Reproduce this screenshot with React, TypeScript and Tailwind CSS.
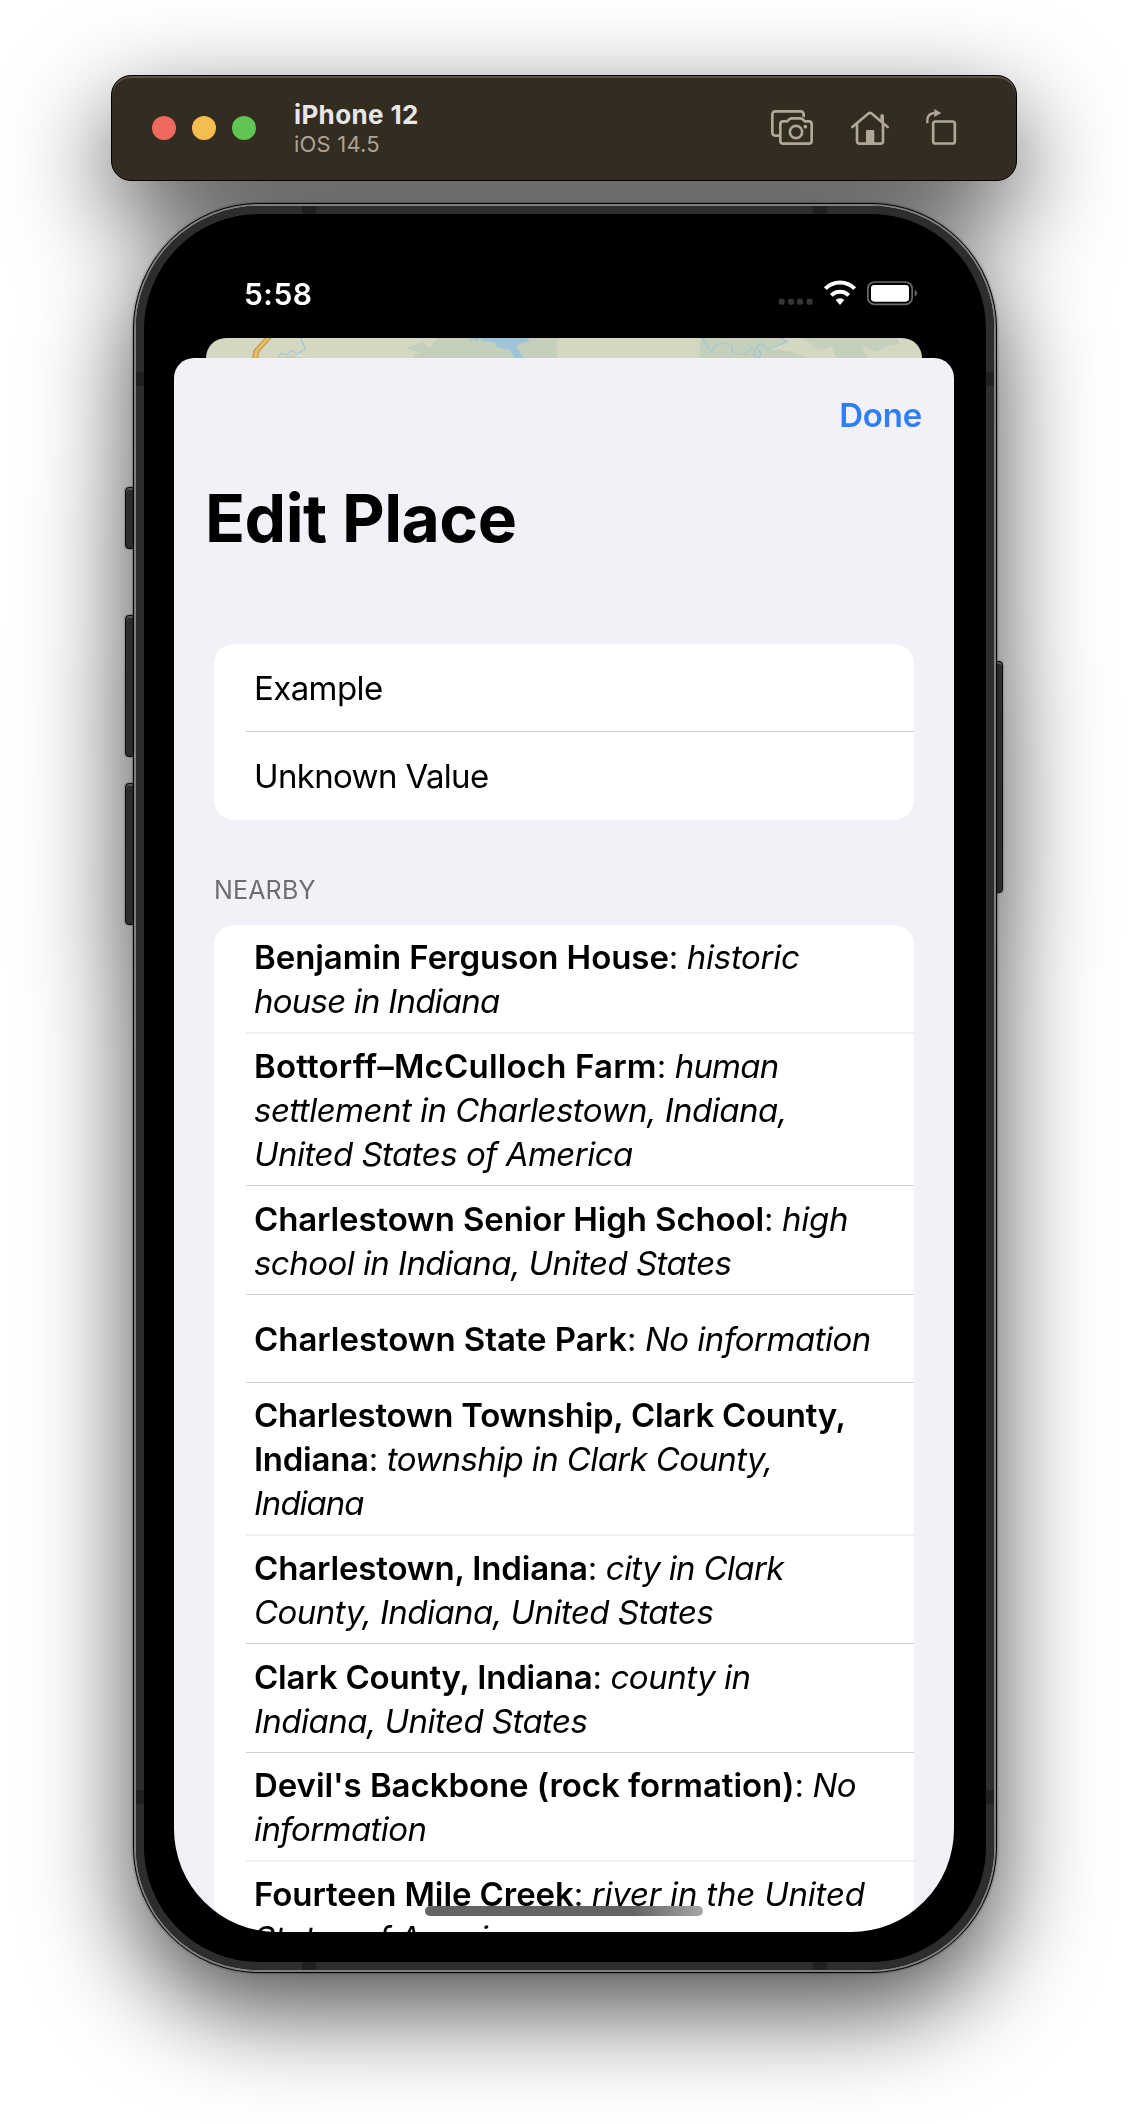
import React from "react";

type Place = {
  name: string;
  first?: string;
  tracking: string;
  lead: string;
  leadTracking: string;
  rest: string[];
  restTracking: string;
  box: string;
};

const faint = "border-b-2 border-[#efeff0]";
const crisp = "border-b border-[#d0d0d2]";

const places: Place[] = [
  { name: "Benjamin Ferguson House", tracking: "tracking-[-0.06px]", lead: "historic", leadTracking: "tracking-[-0.3px]", rest: ["house in Indiana"], restTracking: "tracking-[-0.78px]", box: `h-[109px] pt-[10px] ${faint}` },
  { name: "Bottorff–McCulloch Farm", tracking: "tracking-[0.18px]", lead: "human", leadTracking: "tracking-[-0.8px]", rest: ["settlement in Charlestown, Indiana,", "United States of America"], restTracking: "tracking-[-0.52px]", box: `h-[152px] pt-[10px] ${crisp}` },
  { name: "Charlestown Senior High School", tracking: "tracking-[-0.13px]", lead: "high", leadTracking: "tracking-[-0.3px]", rest: ["school in Indiana, United States"], restTracking: "tracking-[-0.54px]", box: `h-[109px] pt-[11px] ${crisp}` },
  { name: "Charlestown State Park", tracking: "tracking-[-0.06px]", lead: "No information", leadTracking: "tracking-[-0.5px]", rest: [], restTracking: "tracking-normal", box: `h-[88px] pt-[22px] ${crisp}` },
  { first: "Charlestown Township, Clark County,", name: "Indiana", tracking: "tracking-[-0.27px]", lead: "township in Clark County,", leadTracking: "tracking-[-0.62px]", rest: ["Indiana"], restTracking: "tracking-[-1px]", box: `h-[153px] pt-[10px] ${faint}` },
  { name: "Charlestown, Indiana", tracking: "tracking-[-0.16px]", lead: "city in Clark", leadTracking: "tracking-[-0.65px]", rest: ["County, Indiana, United States"], restTracking: "tracking-[-0.54px]", box: `h-[108px] pt-[10px] ${crisp}` },
  { name: "Clark County, Indiana", tracking: "tracking-[-0.2px]", lead: "county in", leadTracking: "tracking-[-0.5px]", rest: ["Indiana, United States"], restTracking: "tracking-[-0.54px]", box: `h-[109px] pt-[11px] ${crisp}` },
  { name: "Devil's Backbone (rock formation)", tracking: "tracking-[-0.06px]", lead: "No", leadTracking: "tracking-[-0.5px]", rest: ["information"], restTracking: "tracking-[-0.6px]", box: `h-[109px] pt-[10px] ${faint}` },
  { name: "Fourteen Mile Creek", tracking: "tracking-[-0.08px]", lead: "river in the United", leadTracking: "tracking-[-0.2px]", rest: ["States of America"], restTracking: "tracking-[-0.5px]", box: "h-[109px] pt-[10px]" },
];

function PlaceRow({ place }: { place: Place }) {
  return (
    <div className={`ml-8 whitespace-nowrap pl-2 ${place.box}`}>
      {place.first && <p className={`font-semibold ${place.tracking}`}>{place.first}</p>}
      <p>
        <span className={`font-semibold ${place.tracking}`}>{place.name}</span>
        <span className="tracking-[-0.4px]">: </span>
        <em className={place.leadTracking}>{place.lead}</em>
      </p>
      {place.rest.map((line) => (
        <p key={line} className={`italic ${place.restTracking}`}>{line}</p>
      ))}
    </div>
  );
}

function ScreenshotIcon() {
  return (
    <svg viewBox="156 150 126 105" className="h-[35px] w-[42px]" fill="none" stroke="#b1a698" strokeWidth="8">
      <path d="M182 227H169a9 9 0 0 1-9-9V163a9 9 0 0 1 9-9H245a9 9 0 0 1 9 9V172" />
      <path d="M192 184H204L212 177Q215 175 219 175H243Q247 175 250 177L258 184H270a8 8 0 0 1 8 8V243a8 8 0 0 1-8 8H192a8 8 0 0 1-8-8V192a8 8 0 0 1 8-8Z" />
      <circle cx="231" cy="216" r="18.5" />
      <circle cx="259" cy="200" r="5.5" fill="#b1a698" stroke="none" />
    </svg>
  );
}

function HomeIcon() {
  return (
    <svg viewBox="396 150 114 105" className="h-[35px] w-[38px]" fill="none" stroke="#b1a698" strokeWidth="8">
      <path d="M400 201L449 160Q453 157 457 160L506 201" strokeLinecap="round" />
      <path d="M414 192V243a8 8 0 0 0 8 8H484a8 8 0 0 0 8-8V192" />
      <path d="M484 167q0-4 4-4h3q4 0 4 4v24l-11-9zM441 250v-36q0-4 4-4h17q4 0 4 4v36z" fill="#b1a698" stroke="none" />
    </svg>
  );
}

function RotateIcon() {
  return (
    <svg viewBox="618 147 96 108" className="h-9 w-8" fill="none" stroke="#b1a698">
      <rect x="642.5" y="184.500" width="65" height="66" rx="7" strokeWidth="8" />
      <path d="M625 190V182Q625 160 647 159" strokeWidth="7" />
      <path d="M646 147l21 12l-21 12z" fill="#b1a698" stroke="none" />
    </svg>
  );
}

function Toolbar() {
  return (
    <div className="ml-[111px] flex h-[106px] w-[906px] items-center rounded-[20px] border border-black bg-[#332c21] pl-[40px] pr-[59px] shadow-[inset_0_2px_0_0_#5b5240]">
      <div className="flex gap-4">
        <span className="size-6 rounded-full bg-[#ee6a5f]" />
        <span className="size-6 rounded-full bg-[#f5bd4f]" />
        <span className="size-6 rounded-full bg-[#61c554]" />
      </div>
      <div className="ml-[38px] flex-1">
        <p className="text-[26px] leading-8 font-bold tracking-[0.36px] text-[#e9e7e5]">iPhone 12</p>
        <p className="text-[22px] leading-[26px] tracking-[0.2px] text-[#aca296]">iOS 14.5</p>
      </div>
      <div className="-mt-[2px] flex items-end">
        <ScreenshotIcon />
        <span className="ml-[38px]"><HomeIcon /></span>
        <span className="ml-[36px]"><RotateIcon /></span>
      </div>
    </div>
  );
}

function StatusBar() {
  return (
    <div className="flex h-[94px] justify-between pl-[70px] pr-[36px] text-white">
      <span className="mt-[28px] text-[30px] leading-[44px] font-semibold tracking-[0.5px]">5:58</span>
      <svg viewBox="54 30 420 78" className="mt-[36px] h-[26px] w-[140px]" fill="none">
        <g fill="#363636">
          <rect x="56" y="86" width="18" height="18" rx="6" />
          <rect x="84" y="86" width="18" height="18" rx="6" />
          <rect x="111" y="86" width="18" height="18" rx="6" />
          <rect x="140" y="86" width="18" height="18" rx="6" />
        </g>
        <g stroke="#fff" strokeWidth="12">
          <path d="M196 56A62 62 0 0 1 284 56" />
          <path d="M214 76A36 36 0 0 1 266 76" />
        </g>
        <path d="M227 90A19 19 0 0 1 253 90L240 105Z" fill="#fff" />
        <rect x="323.500" y="36" width="133" height="67" rx="20" stroke="#6c6c6c" strokeWidth="5" />
        <rect x="333" y="45" width="114" height="50" rx="10" fill="#fff" />
        <path d="M464 60q7 3 7 10t-7 10z" fill="#6c6c6c" />
      </svg>
    </div>
  );
}

function MapStrip() {
  return (
    <svg viewBox="33.500 54 1497 60" preserveAspectRatio="none" className="mx-8 block h-5 w-[716px] rounded-t-[20px] bg-[#d6d7c2]" fill="none">
      <path d="M450 85L487 65L500 83L518 54H769L766 114H465L478 97Z" fill="#c5d0bc" />
      <path d="M1067 54H1240L1252 66L1205 88Q1260 88 1292 114H1065Z" fill="#c5d0bc" />
      <path d="M1283 54H1478L1486 75L1468 73L1434 95L1405 77L1416 114H1352L1342 80L1313 91Z" fill="#c5d0bc" />
      <path d="M184 114L212 105L245 114Z" fill="#c5d0bc" />
      <path d="M215 96L250 112H225Z" fill="#dedbd3" />
      <path d="M582 64L588 54H710L706 66L686 71L684 84L698 114H678L669 90L640 80L638 66L612 64L606 55L600 65L594 56Z" fill="#9fc4d8" />
      <path d="M166 50L139 93L136 116" stroke="#d29a62" strokeWidth="13" />
      <path d="M166 50L139 93L136 116" stroke="#dec752" strokeWidth="6" />
      <path d="M232 52L234 66L242 86L222 103L213 91L204 103L191 100L184 114M1072 54L1080 76L1091 97L1098 75L1115 68L1132 77L1135 101L1162 104L1172 86Q1184 84 1180 100L1176 108L1188 112Q1200 104 1184 84L1192 68L1208 89L1250 65L1236 54" stroke="#9cc6d3" strokeWidth="2.500" />
    </svg>
  );
}

function Sheet() {
  return (
    <div className="h-[1574px] rounded-t-[20px] bg-[#f2f1f7] pt-[35px] text-[33px] leading-[44px] text-black">
      <p className="pr-8 text-right font-semibold tracking-[-0.2px] text-[#307ef6]">Done</p>
      <h1 className="mt-[41px] pl-[31px] text-[66px] leading-[80px] font-bold tracking-[-0.5px]">Edit Place</h1>
      <div className="mx-10 mt-[86px] rounded-[20px] bg-white">
        <div className={`ml-8 h-[88px] pt-[22px] pl-2 tracking-[-0.6px] ${crisp}`}>Example</div>
        <div className="ml-8 h-[88px] pt-[22px] pl-2 tracking-[-0.65px]">Unknown Value</div>
      </div>
      <h2 className="mt-[55px] ml-10 text-[25px] leading-[30px] tracking-[0.17px] text-[#6d6d72]">NEARBY</h2>
      <div className="mx-10 mt-5 rounded-t-[20px] bg-white">
        {places.map((place) => (
          <PlaceRow key={place.name + place.lead} place={place} />
        ))}
      </div>
    </div>
  );
}

const bands = [
  "-top-2 left-[158px] h-2 w-3.5",
  "-top-2 left-[669px] h-2 w-3.5",
  "-bottom-2 left-[158px] h-2 w-3.5",
  "-bottom-2 left-[669px] h-2 w-3.5",
  "-left-2 top-[158px] h-3.5 w-2",
  "-right-2 top-[158px] h-3.5 w-2",
  "-left-2 bottom-[158px] h-3.5 w-2",
  "-right-2 bottom-[158px] h-3.5 w-2",
];

const sideButtons = [
  "-left-2 top-[284px] h-[62px] w-3",
  "-left-2 top-[412px] h-[142px] w-3",
  "-left-2 top-[580px] h-[142px] w-3",
  "-right-1.5 top-[458px] h-[232px] w-3",
];

function Phone() {
  return (
    <div className="relative mt-[22px] ml-[133px] h-[1770px] w-[864px]">
      {sideButtons.map((place) => (
        <span key={place} className={`absolute rounded-[4px] border border-[#0c0c0c] bg-[#2d2d2d] shadow-[inset_0_2px_0_0_#5a5a5a,0_0_2px_rgba(0,0,0,0.5)] ${place}`} />
      ))}
      <div className="relative h-full rounded-[126px] border border-black bg-black shadow-[0_0_2px_1px_rgba(0,0,0,0.25)]">
        <div className="h-full rounded-[125px] border-2 border-[#7f7f7f]">
          <div className="relative h-full rounded-[123px] border-8 border-[#2d2d2d] pt-[30px] pr-8 pl-[30px]">
            {bands.map((place) => (
              <span key={place} className={`absolute bg-[#202020] ${place}`} />
            ))}
            <div className="relative h-[1688px] w-[780px] overflow-hidden rounded-b-[103px]">
              <StatusBar />
              <MapStrip />
              <Sheet />
              <span className="absolute bottom-4 left-[251px] h-2.5 w-[278px] rounded-full bg-linear-to-r from-[#646464] from-75% to-[#a6a6a6]" />
            </div>
          </div>
        </div>
      </div>
    </div>
  );
}

export default function App() {
  return (
    <main className="h-[2124px] w-[1128px] overflow-hidden bg-white pt-[75px] font-['Inter',sans-serif]">
      <div className="[filter:drop-shadow(0_36px_50px_rgba(0,0,0,0.7))]">
        <Toolbar />
        <Phone />
      </div>
    </main>
  );
}
